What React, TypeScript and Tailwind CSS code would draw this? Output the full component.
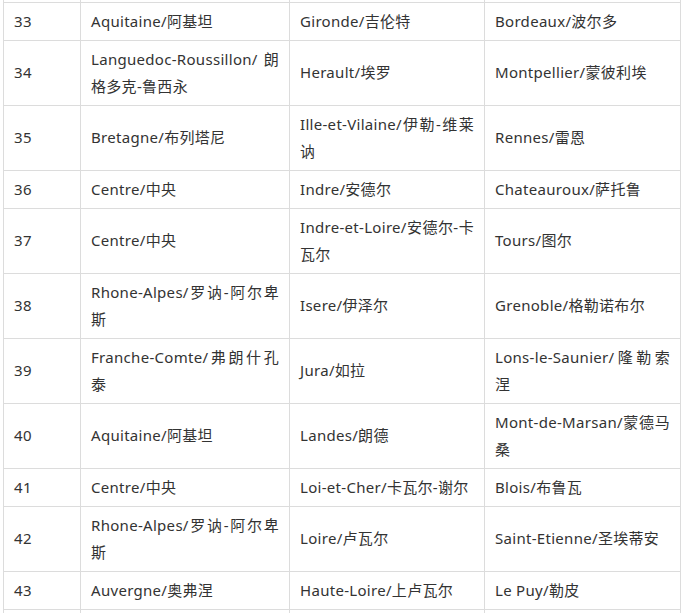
import React from "react";

const rows: [string, string, string, string][] = [
  ["33", "Aquitaine/阿基坦", "Gironde/吉伦特", "Bordeaux/波尔多"],
  ["34", "Languedoc-Roussillon/朗格多克-鲁西永", "Herault/埃罗", "Montpellier/蒙彼利埃"],
  ["35", "Bretagne/布列塔尼", "Ille-et-Vilaine/伊勒-维莱讷", "Rennes/雷恩"],
  ["36", "Centre/中央", "Indre/安德尔", "Chateauroux/萨托鲁"],
  ["37", "Centre/中央", "Indre-et-Loire/安德尔-卡瓦尔", "Tours/图尔"],
  ["38", "Rhone-Alpes/罗讷-阿尔卑斯", "Isere/伊泽尔", "Grenoble/格勒诺布尔"],
  ["39", "Franche-Comte/弗朗什孔泰", "Jura/如拉", "Lons-le-Saunier/隆勒索涅"],
  ["40", "Aquitaine/阿基坦", "Landes/朗德", "Mont-de-Marsan/蒙德马桑"],
  ["41", "Centre/中央", "Loi-et-Cher/卡瓦尔-谢尔", "Blois/布鲁瓦"],
  ["42", "Rhone-Alpes/罗讷-阿尔卑斯", "Loire/卢瓦尔", "Saint-Etienne/圣埃蒂安"],
  ["43", "Auvergne/奥弗涅", "Haute-Loire/上卢瓦尔", "Le Puy/勒皮"],
];

export default function App() {
  return (
    <div className="bg-white h-[613px] overflow-hidden px-[3px] text-[15px] leading-[27px] tracking-[0.3px] text-[#333] font-['Noto_Sans','Noto_Sans_CJK_SC',sans-serif]">
      <table className="w-[677px] table-fixed border-collapse">
        <colgroup>
          <col className="w-[77px]" />
          <col className="w-[209px]" />
          <col className="w-[195px]" />
          <col className="w-[196px]" />
        </colgroup>
        <tbody>
          {/* cut-off row above */}
          <tr className="h-[2px]">
            <td className="border-x border-[#dcdcdc] p-0" />
            <td className="border-x border-[#dcdcdc] p-0" />
            <td className="border-x border-[#dcdcdc] p-0" />
            <td className="border-x border-[#dcdcdc] p-0" />
          </tr>
          {rows.map((r) => (
            <tr key={r[0]}>
              {r.map((c, i) => (
                <td
                  key={i}
                  className="border border-[#dcdcdc] px-[10px] py-[5px] text-justify align-middle break-words"
                >
                  {c}
                </td>
              ))}
            </tr>
          ))}
          <tr className="h-[10px]">
            <td className="border-x border-[#dcdcdc] p-0" />
            <td className="border-x border-[#dcdcdc] p-0" />
            <td className="border-x border-[#dcdcdc] p-0" />
            <td className="border-x border-[#dcdcdc] p-0" />
          </tr>
        </tbody>
      </table>
    </div>
  );
}
